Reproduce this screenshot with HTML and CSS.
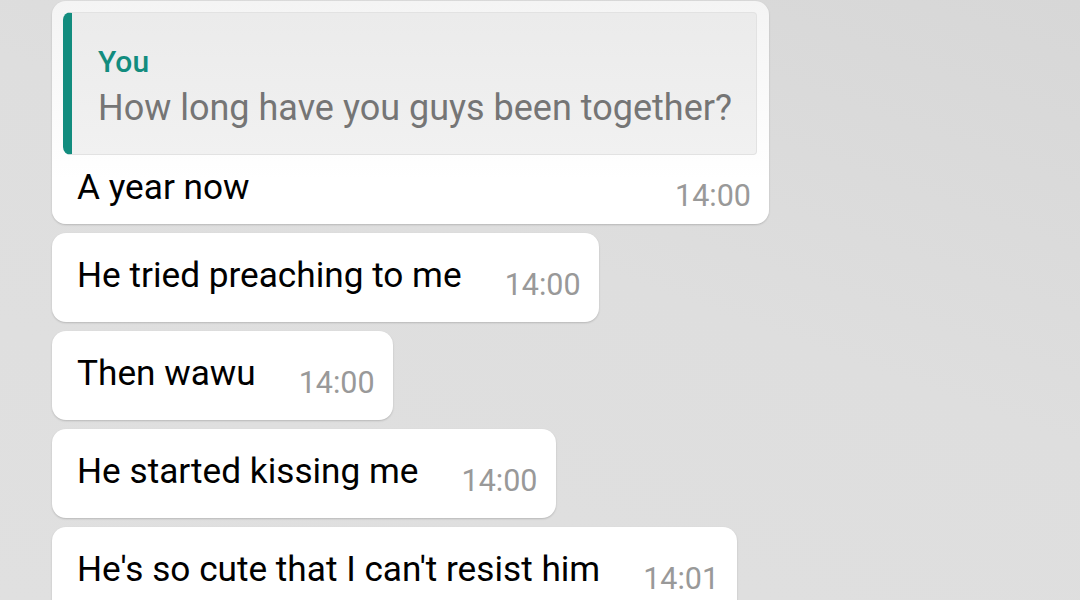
FILE: index.html
```html
<!DOCTYPE html>
<html>
<head>
<meta charset="utf-8">
<link rel="stylesheet" href="styles.css">
</head>
<body>
<div class="chat">
  <div class="bubble first">
    <div class="quote">
      <div class="q-name">You</div>
      <div class="q-text">How long have you guys been together?</div>
    </div>
    <div class="row">
      <span class="msg">A year now</span>
      <span class="time">14:00</span>
    </div>
  </div>
  <div class="bubble">
    <div class="row">
      <span class="msg">He tried preaching to me</span>
      <span class="time">14:00</span>
    </div>
  </div>
  <div class="bubble">
    <div class="row">
      <span class="msg">Then wawu</span>
      <span class="time">14:00</span>
    </div>
  </div>
  <div class="bubble">
    <div class="row">
      <span class="msg">He started kissing me</span>
      <span class="time">14:00</span>
    </div>
  </div>
  <div class="bubble">
    <div class="row">
      <span class="msg">He's so cute that I can't resist him</span>
      <span class="time">14:01</span>
    </div>
  </div>
</div>
</body>
</html>
```

FILE: styles.css
```css
html, body {
  margin: 0;
  padding: 0;
}
body {
  background: linear-gradient(200deg, #d7d7d7 0%, #dedede 45%, #e0e0e0 100%);
  font-family: Roboto, "Liberation Sans", sans-serif;
  height: 600px;
  overflow: hidden;
}
.chat {
  display: flex;
  flex-direction: column;
  align-items: flex-start;
  gap: 9px;
  padding: 1px 0 0 52px;
}
.bubble {
  background: #fff;
  border-radius: 14px;
  box-shadow: 0 1px 2px rgba(0, 0, 0, 0.18);
  box-sizing: border-box;
}
.first {
  padding: 11px 12px 0 11px;
  width: 717px;
  height: 223px;
  background: linear-gradient(180deg, #f4f4f4 0%, #ffffff 80%);
}
.quote {
  background: linear-gradient(180deg, #ebebeb 0%, #f1f1f1 100%);
  border: 1px solid #e2e2e2;
  border-left: 9px solid #128c7e;
  border-radius: 8px 4px 4px 8px;
  height: 143px;
  box-sizing: border-box;
  padding: 31px 0 0 26px;
}
.q-name {
  color: #128c7e;
  font-size: 30px;
  font-weight: 500;
  line-height: 36px;
}
.q-text {
  color: #757575;
  font-size: 36px;
  line-height: 44px;
  margin-top: 6px;
  white-space: nowrap;
}
.row {
  display: flex;
  align-items: flex-end;
  padding: 0 18px 0 25px;
  height: 89px;
  box-sizing: border-box;
}
.first .row {
  padding: 0 6px 0 14px;
  height: 69px;
  justify-content: space-between;
}
.msg {
  color: #000;
  font-size: 35.2px;
  line-height: 48px;
  padding-bottom: 23px;
  white-space: nowrap;
}
.first .msg {
  padding-bottom: 13px;
}
.time {
  color: #999;
  font-size: 30.5px;
  line-height: 36px;
  margin-left: 43px;
  padding-bottom: 19px;
  white-space: nowrap;
}
.first .time {
  padding-bottom: 10px;
}
```
